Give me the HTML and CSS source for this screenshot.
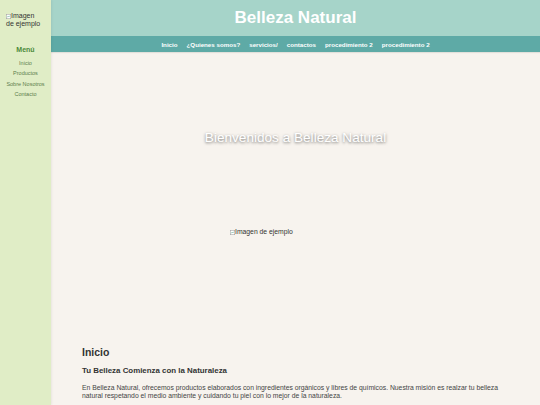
FILE: index.html
```html
<!DOCTYPE html>
<html lang="es">
<head>
<meta charset="utf-8">
<title>Belleza Natural</title>
<link rel="stylesheet" href="styles.css">
</head>
<body>
<div class="page">
  <aside class="sidebar">
    <div class="logo"><svg class="broken" viewBox="0 0 10 10" width="5" height="5"><rect x="0.5" y="0.5" width="9" height="9" fill="#fff" stroke="#999"/><path d="M2 7 L4 4 L6 6 L8 3" fill="none" stroke="#6a9" stroke-width="1"/></svg>Imagen de ejemplo</div>
    <h3 class="menu-title">Menú</h3>
    <ul class="side-menu">
      <li>Inicio</li>
      <li>Productos</li>
      <li>Sobre Nosotros</li>
      <li>Contacto</li>
    </ul>
  </aside>
  <div class="main">
    <header class="header">
      <h1 class="brand">Belleza Natural</h1>
    </header>
    <nav class="nav">
      <a>Inicio</a>
      <a>¿Quienes somos?</a>
      <a>servicios/</a>
      <a>contactos</a>
      <a>procedimiento 2</a>
      <a>procedimiento 2</a>
    </nav>
    <section class="hero">
      <h2 class="hero-title">Bienvenidos a Belleza Natural</h2>
      <div class="hero-img"><svg class="broken" viewBox="0 0 10 10" width="5" height="5"><rect x="0.5" y="0.5" width="9" height="9" fill="#fff" stroke="#999"/><path d="M2 7 L4 4 L6 6 L8 3" fill="none" stroke="#6a9" stroke-width="1"/></svg>Imagen de ejemplo</div>
    </section>
    <section class="content">
      <h2 class="section-title">Inicio</h2>
      <h3 class="subtitle">Tu Belleza Comienza con la Naturaleza</h3>
      <p class="text">En Belleza Natural, ofrecemos productos elaborados con ingredientes orgánicos y libres de químicos. Nuestra misión es realzar tu belleza natural respetando el medio ambiente y cuidando tu piel con lo mejor de la naturaleza.</p>
    </section>
  </div>
</div>
</body>
</html>
```

FILE: styles.css
```css
* { box-sizing: border-box; }
html, body {
  margin: 0;
  padding: 0;
  height: 100%;
  overflow: hidden;
}
body {
  font-family: "Liberation Sans", Arial, sans-serif;
  background: #f7f3ee;
  color: #333;
}
.page {
  display: flex;
  min-height: 405px;
}
.sidebar {
  width: 51px;
  flex: none;
  background: #e0edc6;
  box-shadow: 1px 0 2px rgba(0,0,0,0.06);
  padding: 12px 0 0 6px;
  position: relative;
  z-index: 1;
}
.logo {
  font-size: 7px;
  line-height: 8px;
  color: #333;
  width: 38px;
}
.broken {
  vertical-align: -1px;
}
.menu-title {
  margin: 17px 0 0 -6px;
  text-align: center;
  font-size: 7px;
  line-height: 9px;
  color: #4b8a3a;
  font-weight: bold;
}
.side-menu {
  list-style: none;
  margin: 4px 0 0 -6px;
  padding: 0;
  text-align: center;
}
.side-menu li {
  font-size: 5.5px;
  line-height: 10.3px;
  color: #5d7d4c;
}
.main {
  flex: 1;
  display: flex;
  flex-direction: column;
}
.header {
  background: #a6d4c9;
  height: 36px;
  display: flex;
  align-items: center;
  justify-content: center;
}
.brand {
  margin: 0;
  color: #fff;
  font-size: 17px;
  font-weight: bold;
}
.nav {
  background: #5eaaa6;
  height: 16px;
  display: flex;
  justify-content: center;
  align-items: center;
  gap: 9px;
  box-shadow: 0 1px 1px rgba(0,0,0,0.08);
}
.nav a {
  color: #fff;
  font-size: 6.2px;
  font-weight: bold;
}
.hero {
  padding-top: 78px;
}
.hero-title {
  margin: 0;
  text-align: center;
  font-size: 13.6px;
  line-height: 16px;
  font-weight: normal;
  color: #fff;
  text-shadow: 0 1px 3px rgba(0,0,0,0.55);
}
.hero-img {
  margin: 82px 0 0 179px;
  font-size: 6.8px;
  line-height: 8px;
  color: #333;
}
.content {
  padding: 110px 35px 0 31px;
}
.section-title {
  margin: 0;
  font-size: 10.5px;
  line-height: 13px;
  color: #333;
}
.subtitle {
  margin: 7px 0 0;
  font-size: 7.9px;
  line-height: 10px;
  color: #333;
}
.text {
  margin: 8px 0 0;
  font-size: 6.8px;
  line-height: 8px;
  color: #444;
}
```
